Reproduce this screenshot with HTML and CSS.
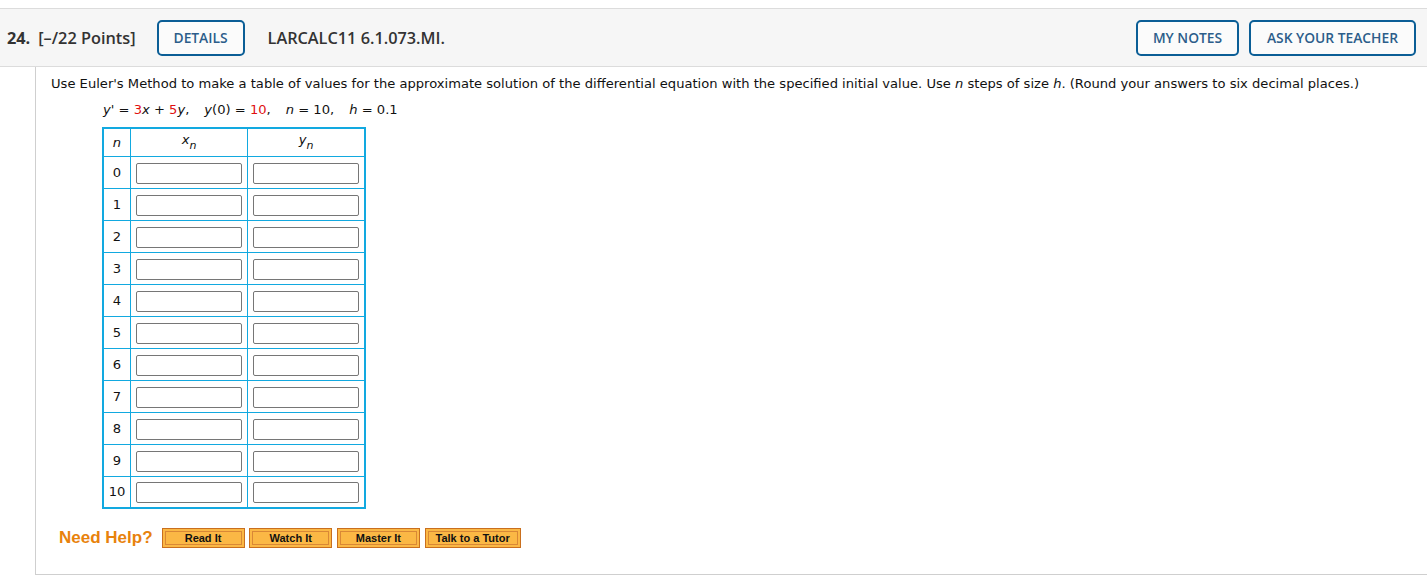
FILE: index.html
```html
<!DOCTYPE html>
<html>
<head>
<meta charset="utf-8">
<link rel="stylesheet" href="styles.css">
</head>
<body>
<div class="page">
  <div class="header">
    <div class="qnum">24.</div>
    <div class="points">[–/22 Points]</div>
    <button class="btn details">DETAILS</button>
    <div class="qid">LARCALC11 6.1.073.MI.</div>
    <div class="spacer"></div>
    <button class="btn notes">MY NOTES</button>
    <button class="btn ask">ASK YOUR TEACHER</button>
  </div>
  <div class="content">
    <p class="prompt">Use Euler's Method to make a table of values for the approximate solution of the differential equation with the specified initial value. Use <i>n</i> steps of size <i>h</i>. (Round your answers to six decimal places.)</p>
    <p class="eq"><i>y'</i> = <span class="red">3</span><i>x</i> + <span class="red">5</span><i>y</i>,<span class="gap"></span><i>y</i>(0) = <span class="red">10</span>,<span class="gap"></span><i>n</i> = 10,<span class="gap"></span><i>h</i> = 0.1</p>
    <table class="grid">
      <tr class="head"><th class="ncol"><i>n</i></th><th class="vcol"><i>x</i><sub><i>n</i></sub></th><th class="vcol"><i>y</i><sub><i>n</i></sub></th></tr>
      <tr><td class="ncol">0</td><td><input type="text"></td><td><input type="text"></td></tr>
      <tr><td class="ncol">1</td><td><input type="text"></td><td><input type="text"></td></tr>
      <tr><td class="ncol">2</td><td><input type="text"></td><td><input type="text"></td></tr>
      <tr><td class="ncol">3</td><td><input type="text"></td><td><input type="text"></td></tr>
      <tr><td class="ncol">4</td><td><input type="text"></td><td><input type="text"></td></tr>
      <tr><td class="ncol">5</td><td><input type="text"></td><td><input type="text"></td></tr>
      <tr><td class="ncol">6</td><td><input type="text"></td><td><input type="text"></td></tr>
      <tr><td class="ncol">7</td><td><input type="text"></td><td><input type="text"></td></tr>
      <tr><td class="ncol">8</td><td><input type="text"></td><td><input type="text"></td></tr>
      <tr><td class="ncol">9</td><td><input type="text"></td><td><input type="text"></td></tr>
      <tr><td class="ncol">10</td><td><input type="text"></td><td><input type="text"></td></tr>
    </table>
    <div class="help">
      <span class="need">Need Help?</span>
      <span class="hbtn w82">Read It</span>
      <span class="hbtn w82">Watch It</span>
      <span class="hbtn w82">Master It</span>
      <span class="hbtn w95">Talk to a Tutor</span>
    </div>
  </div>
</div>
</body>
</html>
```

FILE: styles.css
```css
html, body {
  margin: 0;
  padding: 0;
  background: #fff;
}
.page {
  padding-top: 8px;
  overflow: hidden;
  height: 567px;
}
.header {
  display: flex;
  align-items: center;
  height: 57px;
  background: #f6f6f6;
  border-top: 1px solid #dcdcdc;
  border-bottom: 1px solid #dcdcdc;
  padding: 0 11px 0 7px;
  font-family: "Open Sans", sans-serif;
  color: #333;
}
.qnum {
  font-weight: 700;
  font-size: 16.3px;
  margin-right: 8px;
}
.points {
  font-weight: 600;
  font-size: 16.3px;
  margin-right: 21px;
}
.qid {
  font-weight: 600;
  font-size: 16.3px;
  margin-left: 23px;
}
.spacer { flex: 1; }
.btn {
  font-family: "Open Sans", sans-serif;
  font-size: 13.8px;
  font-weight: 600;
  color: #2c5d8a;
  background: #fbfbfb;
  border: 2px solid #0b5e96;
  border-radius: 5px;
  height: 36px;
  margin: 0;
  box-sizing: border-box;
  padding: 0;
}
.details { width: 88px; }
.notes { width: 103px; margin-right: 10px; }
.ask { width: 167px; }
.content {
  margin-left: 35px;
  border-left: 1px solid #cfcfcf;
  border-bottom: 1px solid #cfcfcf;
  height: 507px;
  padding-left: 15px;
  font-family: Verdana, "DejaVu Sans", sans-serif;
  font-size: 13.1px;
  color: #111;
}
.prompt {
  margin: 0;
  padding-top: 8px;
  line-height: 18px;
  white-space: nowrap;
}
.eq {
  margin: 8px 0 0 52px;
  line-height: 18px;
  white-space: nowrap;
}
.gap {
  display: inline-block;
  width: 15px;
}
.red { color: #e01010; }
.grid {
  border-collapse: collapse;
  margin: 8px 0 0 51px;
  border: 2px solid #12a9e0;
}
.grid td, .grid th {
  border: 1px solid #12a9e0;
  text-align: center;
  padding: 0;
  font-weight: normal;
}
.grid tr { height: 32px; }
.grid tr.head { height: 28px; }
.ncol { width: 26px; }
.vcol { width: 114px; }
.grid td input {
  width: 106px;
  height: 21px;
  box-sizing: border-box;
  border: 1px solid #767676;
  border-radius: 2px;
  margin: 2px 5px 0 5px;
  padding: 0;
  vertical-align: middle;
}
.grid sub { font-size: 11px; vertical-align: -5px; }
.help {
  display: flex;
  align-items: center;
  margin: 19px 0 0 8px;
  font-family: Arial, "Liberation Sans", sans-serif;
}
.need {
  color: #e8820c;
  font-weight: 700;
  font-size: 17px;
  margin-right: 9px;
}
.hbtn {
  box-sizing: border-box;
  height: 20px;
  margin-right: 4.7px;
  background: #fbb845;
  border: 1px solid #c96f1e;
  box-shadow: inset 0 0 0 2px #fbb845, inset 0 0 0 3px #d98836;
  font-size: 11px;
  font-weight: 700;
  color: #111;
  display: flex;
  align-items: center;
  justify-content: center;
}
.w82 { width: 83px; }
.w95 { width: 96px; }
```
